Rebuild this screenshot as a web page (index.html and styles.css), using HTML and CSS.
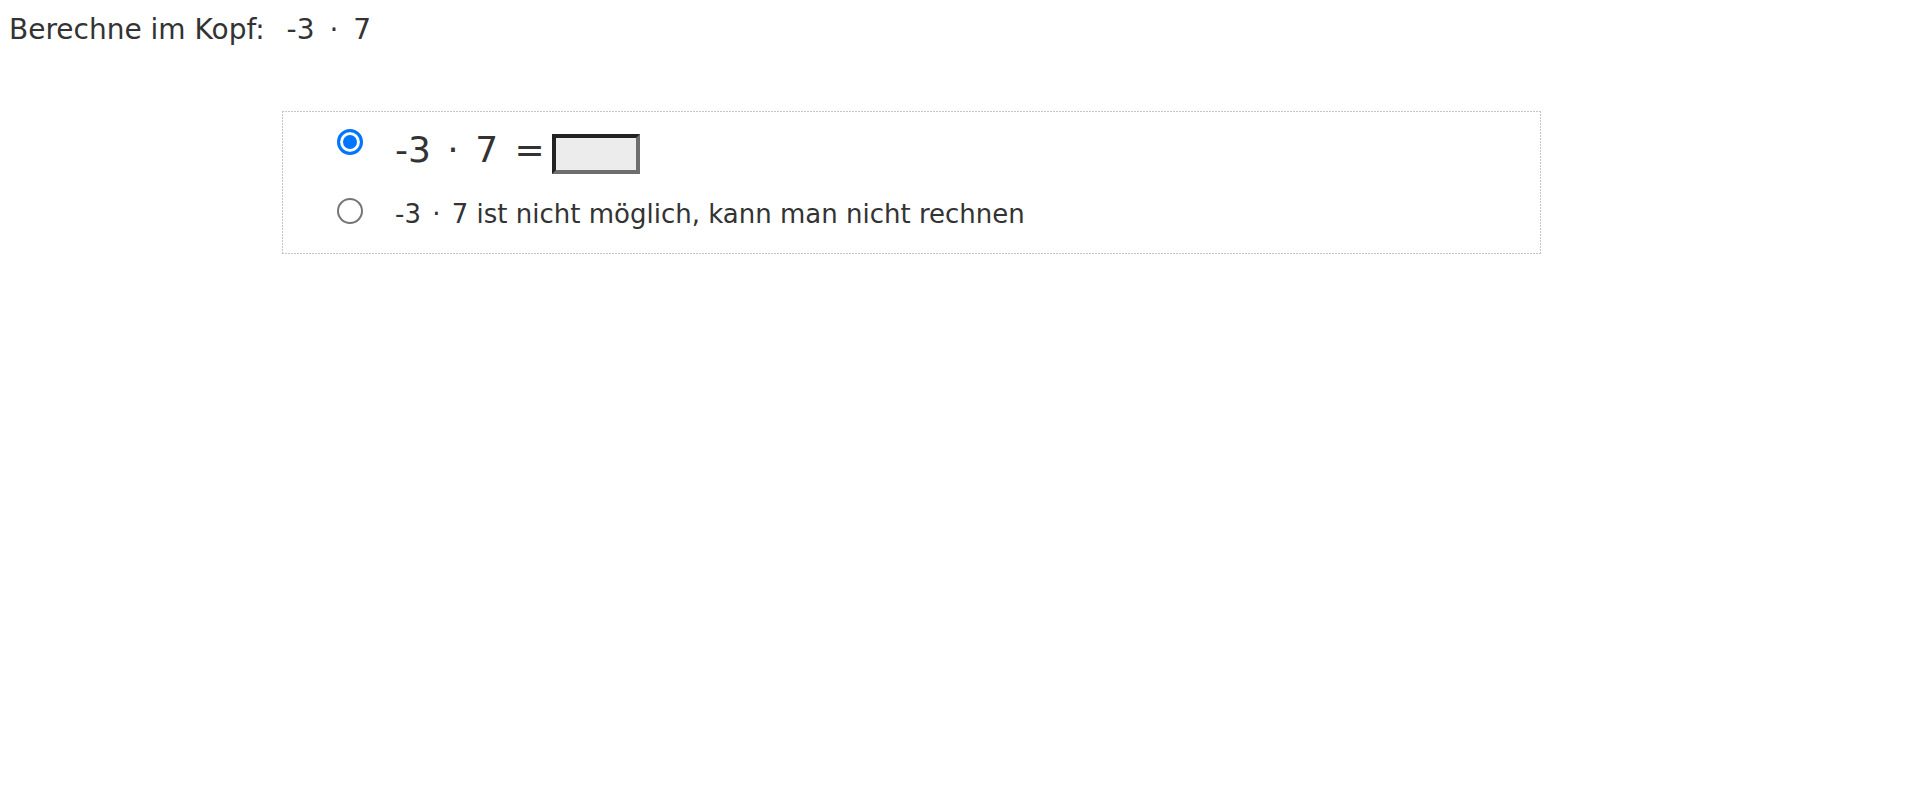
FILE: index.html
```html
<!DOCTYPE html>
<html lang="de">
<head>
<meta charset="utf-8">
<title>Berechne im Kopf</title>
<link rel="stylesheet" href="styles.css">
</head>
<body>
<p class="prompt">Berechne im Kopf: <span class="math">-3 <span class="dot">·</span> 7</span></p>
<div class="choices">
  <label class="option option-main">
    <input type="radio" name="a" class="radio" checked>
    <span class="expr">-3 · 7 =</span>
    <input type="text" class="answer">
  </label>
  <label class="option option-alt">
    <input type="radio" name="a" class="radio">
    <span class="alt-text">-3 <span class="dot">·</span> 7 ist nicht möglich, kann man nicht rechnen</span>
  </label>
</div>
</body>
</html>
```
FILE: styles.css
```css
html, body {
  background: #ffffff;
}
body {
  margin: 8px;
  font-family: "DejaVu Sans", Verdana, sans-serif;
  color: #333333;
}
.prompt {
  margin: 5px 0 0 1px;
  font-size: 28px;
  line-height: 34px;
}
.prompt .math {
  margin-left: 13px;
}
.prompt .dot {
  margin: 0 6px;
}
.choices {
  margin: 64px 0 0 274px;
  width: 1259px;
  height: 143px;
  box-sizing: border-box;
  padding: 17px 0 0 55px;
  display: flex;
  flex-direction: column;
  gap: 24px;
  background:
    repeating-linear-gradient(to right, #c6c6c6 0 2px, transparent 2px 3px) left top / 100% 1px no-repeat,
    repeating-linear-gradient(to right, #c6c6c6 0 2px, transparent 2px 3px) left bottom / 100% 1px no-repeat,
    repeating-linear-gradient(to bottom, #c6c6c6 0 2px, transparent 2px 3px) left top / 1px 100% no-repeat,
    repeating-linear-gradient(to bottom, #c6c6c6 0 2px, transparent 2px 3px) right top / 1px 100% no-repeat,
    #ffffff;
}
.option {
  display: flex;
  align-items: flex-start;
}
.radio {
  appearance: none;
  -webkit-appearance: none;
  margin: 1px 32px 0 0;
  width: 26px;
  height: 26px;
  border-radius: 50%;
  border: 2px solid #767676;
  background: #fff;
  box-sizing: border-box;
  flex: none;
}
.radio:checked {
  border: 3px solid #0075ff;
  box-shadow: inset 0 0 0 3px #fff, inset 0 0 0 13px #0075ff;
}
.option-alt .radio {
  margin-top: 0;
}
.expr {
  font-size: 36px;
  line-height: 42px;
  word-spacing: 5px;
  margin: 1px 7px 0 0;
}
.answer {
  width: 88px;
  height: 40px;
  box-sizing: border-box;
  border-style: solid;
  border-width: 4px;
  border-color: #222222 #6e6e6e #6e6e6e #222222;
  background: #ececec;
  padding: 0;
  margin: 6px 0 0 0;
}
.alt-text {
  font-size: 26px;
  line-height: 30px;
  margin-top: 1px;
}
.alt-text .dot {
  margin: 0 3px;
}
```
